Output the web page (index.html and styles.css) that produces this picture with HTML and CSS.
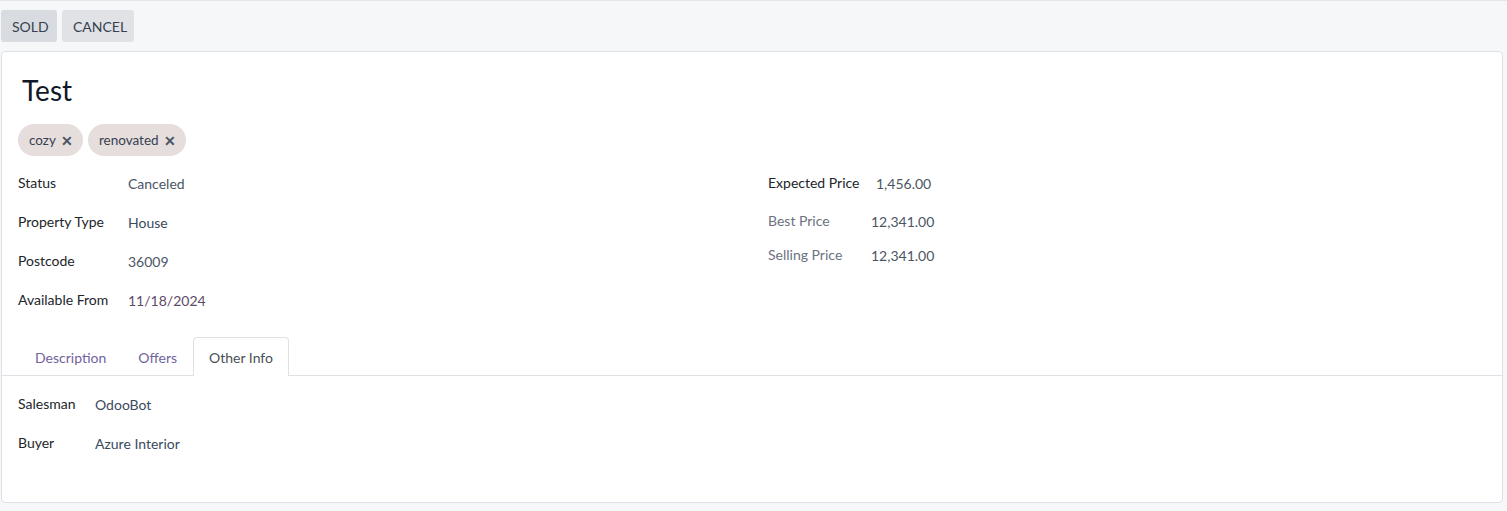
FILE: index.html
```html
<!DOCTYPE html>
<html>
<head>
<meta charset="utf-8">
<link rel="stylesheet" href="styles.css">
</head>
<body>
<div class="page">
  <div class="control-panel">
    <button class="btn btn-sold">SOLD</button>
    <button class="btn btn-cancel">CANCEL</button>
  </div>
  <div class="sheet">
    <h1 class="title">Test</h1>
    <div class="tags">
      <span class="tag">cozy <span class="x">✕</span></span>
      <span class="tag">renovated <span class="x">✕</span></span>
    </div>
    <div class="groups">
      <div class="group group-left">
        <div class="row"><div class="label">Status</div><div class="value v-status">Canceled</div></div>
        <div class="row"><div class="label">Property Type</div><div class="value v-type">House</div></div>
        <div class="row"><div class="label">Postcode</div><div class="value v-post">36009</div></div>
        <div class="row"><div class="label">Available From</div><div class="value v-date">11/18/2024</div></div>
      </div>
      <div class="group group-right">
        <div class="row row-expected"><div class="label">Expected Price</div><div class="value v-expected">1,456.00</div></div>
        <div class="row row-ro"><div class="label label-ro">Best Price</div><div class="value v-num">12,341.00</div></div>
        <div class="row row-ro"><div class="label label-ro">Selling Price</div><div class="value v-num">12,341.00</div></div>
      </div>
    </div>
    <div class="notebook">
      <div class="nav">
        <span class="tab">Description</span>
        <span class="tab">Offers</span>
        <span class="tab active">Other Info</span>
      </div>
      <div class="tab-pane">
        <div class="row row-info"><div class="label label-info">Salesman</div><div class="value v-link">OdooBot</div></div>
        <div class="row row-info"><div class="label label-info">Buyer</div><div class="value v-link">Azure Interior</div></div>
      </div>
    </div>
  </div>
</div>
</body>
</html>
```

FILE: styles.css
```css
html, body {
  margin: 0;
  padding: 0;
}
body {
  background: #f6f7f9;
  font-family: Lato, "Liberation Sans", sans-serif;
  font-size: 14px;
  color: #212529;
}
.page {
  border-top: 1px solid #e2e5e9;
  padding: 0 4px 0 1px;
}
.control-panel {
  display: flex;
  gap: 5px;
  padding: 9px 0 9px 0;
}
.btn {
  height: 32px;
  border: none;
  border-radius: 3px;
  font-family: inherit;
  font-size: 14px;
  color: #374151;
  padding: 0 11px;
  margin: 0;
}
.btn-sold { background: #d8dbdf; width: 56px; }
.btn-cancel { background: #e0e2e6; width: 72px; }
.sheet {
  background: #fff;
  border: 1px solid #dee2e6;
  border-radius: 4px;
  height: 452px;
  box-sizing: border-box;
  padding: 0 0 0 16px;
}
.title {
  margin: 0;
  padding: 18px 0 0 4px;
  font-size: 28px;
  font-weight: 400;
  line-height: 40px;
  color: #111827;
}
.tags {
  display: flex;
  gap: 5px;
  margin-top: 14px;
}
.tag {
  display: inline-flex;
  align-items: center;
  height: 32px;
  padding: 0 10px 0 11px;
  border-radius: 16px;
  background: #e6dedd;
  color: #374151;
  font-size: 13.5px;
}
.tag .x {
  margin-left: 5px;
  font-weight: 700;
  font-size: 14px;
  color: #4b5563;
}
.groups {
  display: flex;
  margin-top: 14px;
}
.group-left { width: 750px; }
.group-right { flex: 1; }
.row {
  display: flex;
  height: 39px;
  align-items: flex-start;
}
.label {
  width: 110px;
  flex: none;
  padding-top: 4px;
}
.value {
  padding-top: 5px;
  color: #495057;
}
.v-status { color: #4b5563; }
.v-type { color: #3b4a5e; }
.v-post { color: #4b5563; }
.v-date { color: #5e4a66; }
.row-expected { height: 38px; }
.row-expected .label { width: 108px; }
.row-expected .value { padding-top: 5px; color: #4b5563; }
.row-ro { height: 34px; }
.label-ro { color: #6b7280; width: 103px; }
.v-num { color: #4b5563; }
.notebook {
  margin: 0 0 0 -16px;
  padding-top: 11px;
}
.nav {
  display: flex;
  padding-left: 17px;
  border-bottom: 1px solid #dee2e6;
  height: 38px;
}
.tab {
  display: flex;
  align-items: center;
  padding: 0 15px;
  color: #71639e;
  border: 1px solid transparent;
  border-bottom: none;
  border-radius: 4px 4px 0 0;
  margin-bottom: -1px;
}
.tab.active {
  background: #fff;
  border-color: #dee2e6;
  color: #495057;
}
.tab-pane {
  padding: 15px 0 0 16px;
}
.row-info .label { width: 77px; }
.v-link { color: #3b4a5e; }
```
